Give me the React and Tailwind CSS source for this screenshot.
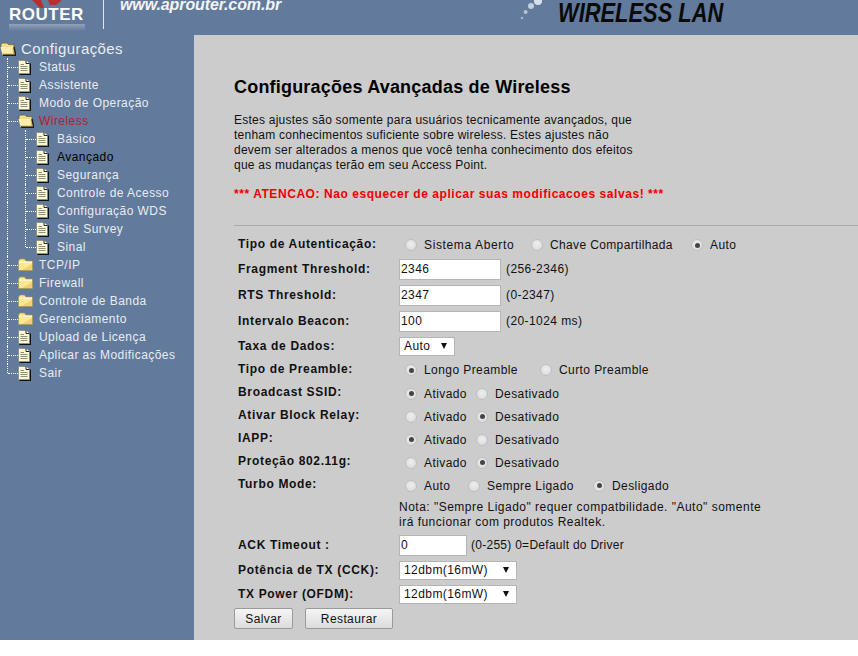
const ClosedFolder = () => (
  <svg width="15" height="14" viewBox="0 0 15 14" className="shrink-0">
    <path d="M0.5 3 L2 1 H6.5 L8 3 H14.5 V12.5 H0.5 Z" fill="#fbe88f" stroke="#a8924a" strokeWidth="0.7" />
    <path d="M1 3.6 H14 V5 H1 Z" fill="#fff6c4" />
    <path d="M4 12 L14 6 V12 Z" fill="#f4cf72" />
  </svg>
)

const OpenFolder = () => (
  <svg width="16" height="14" viewBox="0 0 16 14" className="shrink-0">
    <path d="M1 2.5 L2.5 1 H7 L8.5 2.5 H14 V6 H1 Z" fill="#f2dc8a" stroke="#6b5a25" strokeWidth="0.7" />
    <path d="M0.5 5 H13.5 L15.5 13 H2.5 Z" fill="#fff0ae" />
    <path d="M13.5 5 L15.5 13 H2.5 L2 11.5 H13 L12.5 6 Z" fill="#d9b85c" />
    <path d="M14 5 L15.8 13.3 H3" fill="none" stroke="#1c1c1c" strokeWidth="1.4" />
  </svg>
)

const Doc = () => (
  <svg width="13" height="15" viewBox="0 0 13 15" className="shrink-0">
    <path d="M0.5 0.5 H8 L11.5 3.5 V13.5 H0.5 Z" fill="#fbf8d6" stroke="#8a8a70" strokeWidth="0.8" />
    <path d="M8 0.5 V3.5 H11.5" fill="#fff" stroke="#222" strokeWidth="1" />
    <path d="M2.5 4.5 H6 M2.5 6.5 H9.5 M2.5 8.5 H9.5 M2.5 10.5 H9.5" stroke="#8f8f80" strokeWidth="1" />
    <path d="M12.5 3.5 V14.5 H1.5" fill="none" stroke="#111" strokeWidth="1.2" />
  </svg>
)

const menu = [
  { label: 'Status', icon: 'doc' },
  { label: 'Assistente', icon: 'doc' },
  { label: 'Modo de Operação', icon: 'doc' },
  { label: 'Wireless', icon: 'open', red: true },
  { label: 'Básico', icon: 'doc', sub: true },
  { label: 'Avançado', icon: 'doc', sub: true, dark: true },
  { label: 'Segurança', icon: 'doc', sub: true },
  { label: 'Controle de Acesso', icon: 'doc', sub: true },
  { label: 'Configuração WDS', icon: 'doc', sub: true },
  { label: 'Site Survey', icon: 'doc', sub: true },
  { label: 'Sinal', icon: 'doc', sub: true, subLast: true },
  { label: 'TCP/IP', icon: 'folder' },
  { label: 'Firewall', icon: 'folder' },
  { label: 'Controle de Banda', icon: 'folder' },
  { label: 'Gerenciamento', icon: 'folder' },
  { label: 'Upload de Licença', icon: 'doc' },
  { label: 'Aplicar as Modificações', icon: 'doc' },
  { label: 'Sair', icon: 'doc', last: true },
]

function MenuRow({ item }) {
  return (
    <div className="flex items-center h-[18px] pl-[7px]">
      <span className={`w-0 border-l border-dotted border-white shrink-0 ${item.last ? 'self-start h-[9px]' : 'self-stretch'}`} />
      {item.sub ? (
        <>
          <span className="w-[17px] shrink-0" />
          <span className={`w-0 border-l border-dotted border-white shrink-0 ${item.subLast ? 'self-start h-[9px]' : 'self-stretch'}`} />
          <span className="w-[10px] border-t border-dotted border-white shrink-0" />
        </>
      ) : (
        <span className="w-[10px] border-t border-dotted border-white shrink-0" />
      )}
      {item.icon === 'doc' && <Doc />}
      {item.icon === 'folder' && <ClosedFolder />}
      {item.icon === 'open' && <OpenFolder />}
      <span
        className={`text-[12px] tracking-[0.45px] whitespace-nowrap ${
          item.icon === 'doc' ? 'ml-[8px]' : item.icon === 'open' ? 'ml-[5px]' : 'ml-[6px]'
        } ${item.red ? 'text-[#b8202c]' : item.dark ? 'text-black' : 'text-[#e8edf3]'}`}
      >
        {item.label}
      </span>
    </div>
  )
}

function Radio({ on }) {
  return (
    <span className="w-[12px] h-[12px] rounded-full border border-[#bfbfbf] bg-[radial-gradient(circle_at_50%_40%,#efefef,#d6d6d6)] flex items-center justify-center shrink-0">
      {on && <span className="w-[5px] h-[5px] rounded-full bg-[#444]" />}
    </span>
  )
}

function RadioOpt({ on, label, width }) {
  return (
    <span className={`flex items-center ${width}`}>
      <Radio on={on} />
      <span className="ml-[7px] whitespace-nowrap">{label}</span>
    </span>
  )
}

// lift: the labels of the radio rows sit a little above their controls
function Row({ label, h, lift, children }) {
  return (
    <div className={`flex items-center ${h}`}>
      <div className={`w-[165px] pl-[4px] font-bold tracking-[0.66px] whitespace-nowrap shrink-0 ${lift ? 'mb-[3px]' : ''}`}>{label}</div>
      <div className="flex items-center text-[12px] tracking-[0.42px]">{children}</div>
    </div>
  )
}

function TextBox({ value, w }) {
  return (
    <span className={`${w} h-[21px] bg-white border border-[#b5b5b5] px-[1px] flex items-center`}>{value}</span>
  )
}

function Select({ value, w }) {
  return (
    <span className={`${w} h-[19px] bg-white border border-[#b5b5b5] pl-[4px] pr-[7px] flex items-center justify-between`}>
      {value}
      <svg width="6" height="6" viewBox="0 0 6 6" className="shrink-0">
        <path d="M0 0 H6 L3 6 Z" fill="#111" />
      </svg>
    </span>
  )
}

function Toggle({ on }) {
  return (
    <>
      <RadioOpt on={on} label="Ativado" width="w-[77px] pl-[6px]" />
      <RadioOpt on={!on} label="Desativado" />
    </>
  )
}

export default function App() {
  return (
    <div className="w-[858px] h-[656px] bg-white font-['Liberation_Sans',Arial,sans-serif] text-[12px] text-[#111] overflow-hidden">
      <header className="h-[35px] bg-[#627a9b] flex overflow-hidden">
        <div className="w-[103px] h-[29px] relative shrink-0">
          <svg width="40" height="8" viewBox="0 0 40 8" className="absolute left-[30px] top-0">
            <path d="M2 0 H11 L14 8 H10 Z M18 0 H32 L26 5 H20 Z" fill="#b5302e" />
          </svg>
          <span className="absolute left-[9px] top-[24px] w-[76px] h-[7px] bg-[linear-gradient(#93a3b9,#627a9b)]" />
          <span className="absolute left-[9px] top-[3px] text-[17px] font-bold text-white tracking-[0.5px] leading-[24px]">ROUTER</span>
        </div>
        <div className="w-px h-[29px] bg-[#dfe5ec] shrink-0" />
        <span className="ml-[16px] w-[161px] -mt-[4px] h-[18px] shrink-0 text-[16px] italic font-bold text-[#f2f4f7] tracking-[-0.1px] leading-[18px] whitespace-nowrap">www.aprouter.com.br</span>
        <svg width="42" height="24" viewBox="0 0 42 24" className="ml-[235px] shrink-0">
          <circle cx="22" cy="1" r="4" fill="#d8e0ea" />
          <circle cx="15" cy="6" r="3" fill="#c2cede" />
          <circle cx="9.6" cy="12" r="2" fill="#b4c2d6" />
          <circle cx="6" cy="18" r="1.3" fill="#a6b5ca" />
        </svg>
        <span className="text-[27px] leading-[27px] italic font-bold text-[#0a0a0a] whitespace-nowrap origin-left scale-x-[0.81]">WIRELESS LAN</span>
      </header>

      <div className="flex h-[605px]">
        <aside className="w-[194px] bg-[#627a9b] shrink-0 pt-[5px]">
          <div className="flex items-center h-[18px]">
            <OpenFolder />
            <span className="ml-[5px] text-[15px] tracking-[0.4px] text-[#e8edf3]">Configurações</span>
          </div>
          {menu.map((item) => (
            <MenuRow key={item.label} item={item} />
          ))}
        </aside>

        <main className="flex-1 bg-[#cccccc] pt-[40px]">
          <div className="pl-[40px] tracking-[0.235px]">
            <h1 className="text-[18px] font-bold leading-[24px] tracking-[0.2px] text-black">Configurações Avançadas de Wireless</h1>
            <p className="mt-[14px] leading-[15px]">
              Estes ajustes são somente para usuários tecnicamente avançados, que
              <br />
              tenham conhecimentos suficiente sobre wireless. Estes ajustes não
              <br />
              devem ser alterados a menos que você tenha conhecimento dos efeitos
              <br />
              que as mudanças terão em seu Access Point.
            </p>
            <p className="mt-[14px] font-bold leading-[15px] tracking-[0.56px] text-[#f00000]">*** ATENCAO: Nao esquecer de aplicar suas modificacoes salvas! ***</p>
          </div>
          <hr className="ml-[40px] mt-[23px] border-[#a8a8a8]" />

          <div className="pl-[40px] mt-[8px]">
            <Row label="Tipo de Autenticação:" h="h-[22px]" lift>
              <RadioOpt on={false} label="Sistema Aberto" width="w-[132px] pl-[6px] tracking-[0.63px]" />
              <RadioOpt on={false} label="Chave Compartilhada" width="w-[160px] tracking-[0.36px]" />
              <RadioOpt on label="Auto" />
            </Row>
            <Row label="Fragment Threshold:" h="h-[26px]">
              <TextBox value="2346" w="w-[102px]" />
              <span className="ml-[5px]">(256-2346)</span>
            </Row>
            <Row label="RTS Threshold:" h="h-[26px]">
              <TextBox value="2347" w="w-[102px]" />
              <span className="ml-[5px]">(0-2347)</span>
            </Row>
            <Row label="Intervalo Beacon:" h="h-[26px]">
              <TextBox value="100" w="w-[102px]" />
              <span className="ml-[5px]">(20-1024 ms)</span>
            </Row>
            <Row label="Taxa de Dados:" h="h-[24px]">
              <Select value="Auto" w="w-[56px]" />
            </Row>
            <Row label="Tipo de Preamble:" h="h-[24px]" lift>
              <RadioOpt on label="Longo Preamble" width="w-[141px] pl-[6px]" />
              <RadioOpt on={false} label="Curto Preamble" />
            </Row>
            <Row label="Broadcast SSID:" h="h-[23px]" lift><Toggle on /></Row>
            <Row label="Ativar Block Relay:" h="h-[23px]" lift><Toggle on={false} /></Row>
            <Row label="IAPP:" h="h-[23px]" lift><Toggle on /></Row>
            <Row label="Proteção 802.11g:" h="h-[23px]" lift><Toggle on={false} /></Row>
            <Row label="Turbo Mode:" h="h-[23px]" lift>
              <RadioOpt on={false} label="Auto" width="w-[69px] pl-[6px]" />
              <RadioOpt on={false} label="Sempre Ligado" width="w-[125px]" />
              <RadioOpt on label="Desligado" />
            </Row>
            <p className="ml-[165px] leading-[15px] tracking-[0.49px] mt-[3px]">
              Nota: "Sempre Ligado" requer compatbilidade. "Auto" somente
              <br />
              irá funcionar com produtos Realtek.
            </p>
            <div className="mt-[2px]">
              <Row label="ACK Timeout :" h="h-[26px]">
                <TextBox value="0" w="w-[68px]" />
                <span className="ml-[4px] tracking-[0.27px]">(0-255) 0=Default do Driver</span>
              </Row>
            </div>
            <Row label="Potência de TX (CCK):" h="h-[24px]"><Select value="12dbm(16mW)" w="w-[118px]" /></Row>
            <Row label="TX Power (OFDM):" h="h-[24px]"><Select value="12dbm(16mW)" w="w-[118px]" /></Row>
            <div className="flex mt-[2px] tracking-[0.4px]">
              <button className="w-[59px] h-[21px] border border-[#9a9a9a] rounded-[2px] bg-[linear-gradient(#f5f5f5,#dcdcdc)]">Salvar</button>
              <button className="ml-[12px] w-[88px] h-[21px] border border-[#9a9a9a] rounded-[2px] bg-[linear-gradient(#f5f5f5,#dcdcdc)]">Restaurar</button>
            </div>
          </div>
        </main>
      </div>
    </div>
  )
}
